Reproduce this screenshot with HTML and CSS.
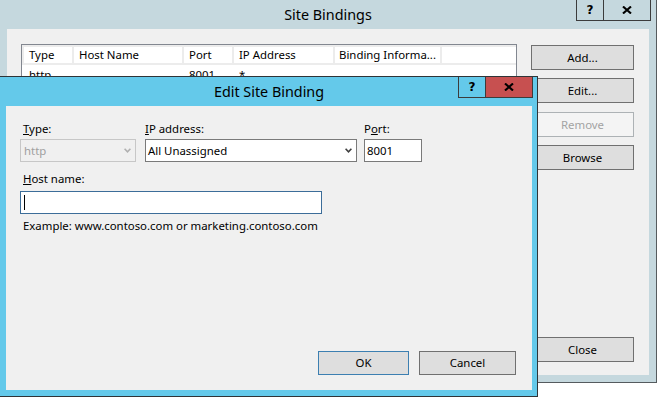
FILE: index.html
```html
<!DOCTYPE html>
<html lang="en">
<head>
<meta charset="utf-8">
<title>Site Bindings</title>
<link rel="stylesheet" href="styles.css">
</head>
<body>
<div class="desktop">
  <section class="window window-back">
    <header class="titlebar">
      <h1 class="title">Site Bindings</h1>
    </header>
    <div class="caption-buttons caption-back">
      <span class="cap-btn cap-help">?</span>
      <span class="cap-btn cap-close"><svg class="cap-x" width="10" height="8" viewBox="0 0 10 8"><path d="M1 0.5 L9 7.5 M9 0.5 L1 7.5"/></svg></span>
    </div>
    <div class="client back-client">
      <div class="listview">
        <div class="lv-header">
          <div class="lv-cell col-type">Type</div>
          <div class="lv-cell col-host">Host Name</div>
          <div class="lv-cell col-port">Port</div>
          <div class="lv-cell col-ip">IP Address</div>
          <div class="lv-cell col-bind">Binding Informa...</div>
          <div class="lv-cell col-fill"></div>
        </div>
        <div class="lv-row">
          <div class="lv-cell col-type">http</div>
          <div class="lv-cell col-host"></div>
          <div class="lv-cell col-port">8001</div>
          <div class="lv-cell col-ip">*</div>
          <div class="lv-cell col-bind"></div>
        </div>
      </div>
      <div class="button-col">
        <button class="btn btn-add">Add...</button>
        <button class="btn btn-edit">Edit...</button>
        <button class="btn btn-remove" disabled>Remove</button>
        <button class="btn btn-browse">Browse</button>
        <button class="btn btn-close">Close</button>
      </div>
    </div>
  </section>

  <section class="window window-front">
    <header class="titlebar">
      <h1 class="title">Edit Site Binding</h1>
    </header>
    <div class="caption-buttons caption-front">
      <span class="cap-btn cap-help">?</span>
      <span class="cap-btn cap-close cap-close-active"><svg class="cap-x" width="10" height="8" viewBox="0 0 10 8"><path d="M1 0.5 L9 7.5 M9 0.5 L1 7.5"/></svg></span>
    </div>
    <div class="client front-client">
      <div class="field-row">
        <div class="field field-type">
          <div class="label label-indent"><u>T</u>ype:</div>
          <div class="combo combo-disabled">
            <span>http</span>
            <svg class="chevron" width="7" height="5" viewBox="0 0 7 5"><path d="M0.6 0.8 L3.5 3.8 L6.4 0.8"/></svg>
          </div>
        </div>
        <div class="field field-ip">
          <div class="label"><u>I</u>P address:</div>
          <div class="combo">
            <span>All Unassigned</span>
            <svg class="chevron" width="7" height="5" viewBox="0 0 7 5"><path d="M0.6 0.8 L3.5 3.8 L6.4 0.8"/></svg>
          </div>
        </div>
        <div class="field field-port">
          <div class="label">P<u>o</u>rt:</div>
          <div class="textbox">8001</div>
        </div>
      </div>
      <div class="host-group">
        <div class="label label-indent label-host"><u>H</u>ost name:</div>
        <div class="textbox textbox-focus"><span class="caret"></span></div>
        <div class="example">Example: www.contoso.com or marketing.contoso.com</div>
      </div>
      <div class="dialog-buttons">
        <button class="btn btn-ok">OK</button>
        <button class="btn btn-cancel">Cancel</button>
      </div>
    </div>
  </section>
</div>
</body>
</html>
```

FILE: styles.css
```css
* {
  box-sizing: border-box;
}

html, body {
  margin: 0;
  padding: 0;
  background: #ffffff;
}

body {
  width: 658px;
  height: 402px;
  overflow: hidden;
  font-family: "Noto Sans", "Open Sans", sans-serif;
  font-size: 11.4px;
  color: #000000;
}

.desktop {
  position: relative;
  width: 658px;
  height: 402px;
}

/* ---------- windows ---------- */
.window {
  position: absolute;
  display: flex;
  flex-direction: column;
  border: 1px solid #555b5e;
}

.window-back {
  left: -1px;
  top: -1px;
  width: 658px;
  height: 384px;
  padding: 0 7px 7px 7px;
  background: #c5d8de;
}

.window-front {
  left: -1px;
  top: 76px;
  width: 539px;
  height: 321px;
  padding: 0 5px 6px 6px;
  background: #64c9ea;
  border-color: #2f3437;
}

.titlebar {
  height: 29px;
  flex: none;
  display: flex;
  justify-content: center;
  align-items: center;
}

.title {
  margin: 0;
  font-size: 14.35px;
  font-weight: normal;
  line-height: 29px;
  color: #000000;
}

/* ---------- caption buttons ---------- */
.caption-buttons {
  position: absolute;
  top: 0;
  display: flex;
}

.caption-back {
  right: 5px;
}

.caption-front {
  right: 4px;
}

.cap-btn {
  height: 21px;
  display: flex;
  align-items: center;
  justify-content: center;
  border: 1px solid #3c3c3c;
  border-top: 0;
}

.cap-help {
  width: 28px;
  font-weight: bold;
  font-size: 12px;
  line-height: 1;
  font-family: "DejaVu Sans", "Noto Sans", sans-serif;
  padding-bottom: 1px;
}

.cap-close {
  width: 47px;
  border-left: 0;
}

.cap-close-active {
  background: #c75050;
}

.cap-x path {
  stroke: #000000;
  stroke-width: 2.1;
  fill: none;
}

/* ---------- clients ---------- */
.client {
  flex: 1;
  background: #f0f0f0;
}

.back-client {
  display: flex;
  gap: 14px;
  padding: 15px 15px 13px 14px;
}

/* list view */
.listview {
  width: 496px;
  height: 300px;
  flex: none;
  border: 1px solid #828790;
  background: #ffffff;
}

.lv-header {
  display: flex;
  gap: 2px;
  padding: 2px 0 2px 2px;
  background: #ececec;
}

.lv-header .lv-cell {
  background: #ffffff;
}

.lv-row {
  display: flex;
  gap: 2px;
  padding: 2px 0 0 2px;
}

.lv-cell {
  height: 16px;
  line-height: 16px;
  padding-left: 5px;
  white-space: nowrap;
  overflow: hidden;
  flex: none;
}

.col-type { width: 48px; }
.col-host { width: 108px; }
.col-port { width: 48px; }
.col-ip { width: 99px; }
.col-bind { width: 105px; padding-left: 4px; }
.col-fill { flex: 1; }

/* buttons */
.button-col {
  width: 103px;
  flex: none;
  display: flex;
  flex-direction: column;
}

.btn {
  height: 25px;
  padding: 0;
  margin: 0;
  background: #dedede;
  border: 1px solid #707070;
  font-family: inherit;
  font-size: 11.4px;
  color: #000000;
  line-height: 1;
}

.btn-add { margin-top: 1px; }
.btn-edit { margin-top: 8px; }
.btn-remove { margin-top: 9px; }
.btn-browse { margin-top: 8px; }
.btn-close { margin-top: auto; }

.btn:disabled {
  background: #f4f4f4;
  border-color: #adb2b5;
  color: #a3a3a3;
}

/* ---------- edit dialog ---------- */
.front-client {
  display: flex;
  flex-direction: column;
  padding: 15px 16px 15px 14px;
}

.field-row {
  display: flex;
}

.field-type { width: 116px; }
.field-ip { width: 212px; margin-left: 9px; }
.field-port { width: 58px; margin-left: 7px; }

.label {
  height: 16px;
  line-height: 16px;
  margin-bottom: 2px;
  white-space: nowrap;
}

.label-indent {
  padding-left: 3px;
}

.label-host {
  margin-bottom: 4px;
}

.combo,
.textbox {
  height: 23px;
  display: flex;
  align-items: center;
  background: #ffffff;
  border: 1px solid #7a7a7a;
  white-space: nowrap;
}

.combo {
  justify-content: space-between;
  padding: 0 4px 0 2px;
}

.combo-disabled {
  background: #f0f0f0;
  border-color: #c7c7c7;
  color: #a0a0a0;
  padding-left: 3px;
}

.chevron path {
  fill: none;
  stroke: #3f3f3f;
  stroke-width: 1.6;
}

.combo-disabled .chevron path {
  stroke: #b0b0b0;
}

.textbox {
  padding-left: 2px;
}

.host-group {
  margin-top: 9px;
  display: flex;
  flex-direction: column;
}

.textbox-focus {
  width: 302px;
  border-color: #3c6d99;
}

.caret {
  width: 1px;
  height: 15px;
  margin-left: 1px;
  background: #000000;
}

.example {
  margin-top: 4px;
  padding-left: 3px;
  line-height: 16px;
  white-space: nowrap;
}

.dialog-buttons {
  margin-top: auto;
  display: flex;
  justify-content: flex-end;
  gap: 10px;
}

.btn-ok {
  width: 91px;
  height: 24px;
  border-color: #3c7fb1;
}

.btn-cancel {
  width: 97px;
  height: 24px;
}
```
